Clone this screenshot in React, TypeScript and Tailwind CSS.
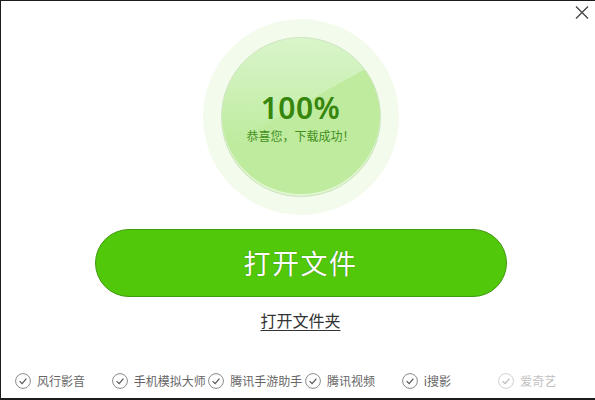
const apps = ['风行影音', '手机模拟大师', '腾讯手游助手', '腾讯视频', 'i搜影', '爱奇艺']

function CheckCircle() {
  return (
    <svg width="16" height="16" viewBox="0 0 16 16" className="shrink-0">
      <circle cx="8" cy="8" r="7.4" fill="none" stroke="#8a8a8a" strokeWidth="1" />
      <path d="M4.6 8.1 L7.1 10.6 L11.4 5.6" fill="none" stroke="#555" strokeWidth="1.2" />
    </svg>
  )
}

export default function App() {
  return (
    <div
      className="w-[595px] h-[400px] bg-white border-l border-t border-b-2 border-[#1c1c1c] relative flex flex-col items-center pl-[5px] overflow-hidden"
      style={{ fontFamily: '"Noto Sans CJK SC", sans-serif' }}
    >
      {/* Close */}
      <button className="absolute top-[4px] right-[6px]">
        <svg width="14" height="15" viewBox="0 0 14 15">
          <path d="M1 1.5 L13 13.5 M13 1.5 L1 13.5" stroke="#444" strokeWidth="1.3" />
        </svg>
      </button>

      {/* Progress circle */}
      <div className="mt-[18px] w-[196px] h-[196px] rounded-full bg-[#f3fbed] flex items-center justify-center">
        <div className="w-[160px] h-[160px] rounded-full border border-[#cfe6c1] bg-[linear-gradient(151deg,transparent_45%,#bfeb9f_45%),linear-gradient(180deg,#d9f5ca_0%,#cbf0b4_35%,#c0eca2_60%)] flex flex-col items-center pt-[50px] shadow-[inset_0_-2px_0_rgba(255,255,255,0.55)]">
          <div className="text-[30px] leading-[40px] font-semibold text-[#36850c] tracking-[0.5px]" style={{ fontFamily: '"Noto Sans", sans-serif' }}>
            100%
          </div>
          <div className="text-[12px] leading-[16px] text-[#43901c]">
            恭喜您，下载成功！
          </div>
        </div>
      </div>

      {/* Open file button */}
      <button className="mt-[14px] w-[412px] h-[68px] rounded-full bg-[#52c80a] border border-[#3f9a10] text-white text-[27px] tracking-[1.5px] [text-shadow:0_0_1px_rgba(0,0,0,0.5)]">
        打开文件
      </button>

      <a className="mt-[12px] text-[16px] leading-[22px] text-[#333] underline underline-offset-[3px]">
        打开文件夹
      </a>

      {/* Bundled apps */}
      <div className="mt-auto mb-[8px] w-full flex pl-[9px]">
        {apps.map((name, i) => (
          <div
            key={name}
            className={i === 5 ? 'w-[98px] flex items-center gap-[6px] opacity-40' : 'w-[98px] flex items-center gap-[6px]'}
          >
            <CheckCircle />
            <span className="text-[12px] leading-[18px] text-[#666] whitespace-nowrap">
              {name}
            </span>
          </div>
        ))}
      </div>
    </div>
  )
}
